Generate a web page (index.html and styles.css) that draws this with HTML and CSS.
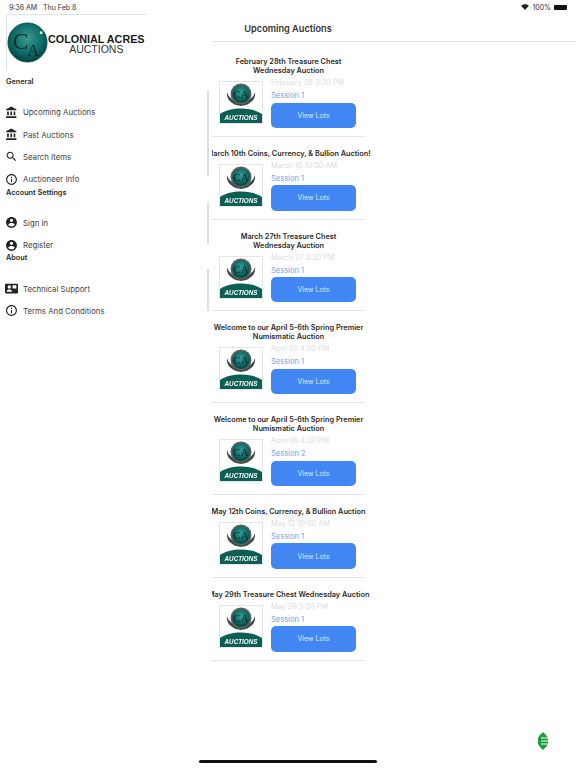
FILE: index.html
```html
<!DOCTYPE html>
<html>

<head>
    <meta charset="utf-8" />
    <meta name="viewport" content="width=device-width, initial-scale=1" />
    <title>Upcoming Auctions</title>
    <link rel="stylesheet" href="styles.css">
</head>

<body>
    <svg class="defs" width="0" height="0">
        <defs>
            <radialGradient id="ball" cx="50%" cy="40%" r="60%">
                <stop offset="0" stop-color="#3a9a92" />
                <stop offset="0.65" stop-color="#0d6a66" />
                <stop offset="1" stop-color="#063f3f" />
            </radialGradient>
            <symbol id="thumb" viewBox="0 0 44 43">
                <rect x="0.5" y="0.5" width="43" height="42" fill="#fff" stroke="#e6e6e6" />
                <path d="M8 11c-1 7 4 11 9 13l5 1 5-1c5-2 10-6 9-13-1 5-7 10-14 10S9 16 8 11z" fill="#3f4947" />
                <circle cx="22" cy="13" r="10.500" fill="#59625f" />
                <circle cx="22" cy="13" r="8.800" fill="url(#ball)" />
                <text x="22" y="17" class="thumb-mark">CA</text>
                <path d="M1 42V33C7 29 14 27.500 22 27.500S37 29 43 33v9z" fill="#0b5f55" />
                <text x="22" y="38.500" class="thumb-label">AUCTIONS</text>
            </symbol>
            <symbol id="i-bank" viewBox="0 0 24 24">
                <path d="M4 10v7h3v-7H4zm6 0v7h3v-7h-3zM2 22h19v-3H2v3zm14-12v7h3v-7h-3zm-4.500-9L2 6v2h19V6l-9.500-5z" />
            </symbol>
            <symbol id="i-search" viewBox="0 0 24 24">
                <path d="M15.500 14h-.79l-.28-.27C15.410 12.590 16 11.110 16 9.500 16 5.910 13.090 3 9.500 3S3 5.910 3 9.500 5.910 16 9.500 16c1.610 0 3.090-.59 4.230-1.570l.27.28v.79l5 4.990L20.490 19l-4.990-5zm-6 0C7.010 14 5 11.990 5 9.500S7.010 5 9.500 5 14 7.010 14 9.500 11.990 14 9.500 14z" />
            </symbol>
            <symbol id="i-info" viewBox="0 0 24 24">
                <path d="M11 17h2v-6h-2v6zm1-15C6.480 2 2 6.480 2 12s4.480 10 10 10 10-4.480 10-10S17.520 2 12 2zm0 18c-4.410 0-8-3.590-8-8s3.590-8 8-8 8 3.590 8 8-3.590 8-8 8zm-1-11h2V7h-2v2z" />
            </symbol>
            <symbol id="i-user" viewBox="0 0 24 24">
                <path d="M12 2C6.480 2 2 6.480 2 12s4.480 10 10 10 10-4.480 10-10S17.520 2 12 2zm0 3c1.660 0 3 1.340 3 3s-1.340 3-3 3-3-1.340-3-3 1.340-3 3-3zm0 14.200c-2.500 0-4.710-1.280-6-3.220.03-1.990 4-3.080 6-3.080 1.990 0 5.970 1.090 6 3.080-1.290 1.940-3.500 3.220-6 3.220z" />
            </symbol>
            <symbol id="i-support" viewBox="0 0 24 24">
                <path d="M22 3H2C.9 3 0 3.900 0 5v14c0 1.100.9 2 2 2h20c1.100 0 2-.9 2-2V5c0-1.100-.9-2-2-2zM8 6c1.660 0 3 1.340 3 3s-1.340 3-3 3-3-1.340-3-3 1.340-3 3-3zm5 12H3v-1c0-2 3.400-3.100 5-3.100s5 1.100 5 3.100v1zm8-6h-7V6h7v6z" />
            </symbol>
        </defs>
    </svg>

    <div class="status">
        <div>9:36 AM &nbsp; Thu Feb 8</div>
        <div class="status-right">
            <svg class="wifi" viewBox="0 0 16 12">
                <path d="M8 12L0 3.500C4.500-.8 11.500-.8 16 3.500z" />
            </svg>
            <span>100%</span>
            <div class="battery"></div>
        </div>
    </div>

    <div class="shell">
        <nav class="sidebar">
            <div class="logo">
                <svg class="logo-ball" viewBox="0 0 42 42">
                    <circle cx="21" cy="21" r="20" fill="url(#ball)" stroke="#0a4f4d" />
                    <circle cx="35" cy="11" r="1.500" fill="#d7f0ee" />
                    <text x="14" y="28" class="logo-c">C</text>
                    <text x="27" y="35" class="logo-a">A</text>
                </svg>
                <div class="logo-text">
                    <div class="logo-name">COLONIAL ACRES</div>
                    <div class="logo-sub">AUCTIONS</div>
                </div>
            </div>

            <div class="nav-title">General</div>
            <a class="nav-row"><svg class="nav-icon"><use href="#i-bank" /></svg>Upcoming Auctions</a>
            <a class="nav-row"><svg class="nav-icon"><use href="#i-bank" /></svg>Past Auctions</a>
            <a class="nav-row"><svg class="nav-icon"><use href="#i-search" /></svg>Search Items</a>
            <a class="nav-row"><svg class="nav-icon"><use href="#i-info" /></svg>Auctioneer Info</a>

            <div class="nav-title">Account Settings</div>
            <a class="nav-row"><svg class="nav-icon"><use href="#i-user" /></svg>Sign In</a>
            <a class="nav-row"><svg class="nav-icon"><use href="#i-user" /></svg>Register</a>

            <div class="nav-title">About</div>
            <a class="nav-row"><svg class="nav-icon"><use href="#i-support" /></svg>Technical Support</a>
            <a class="nav-row"><svg class="nav-icon"><use href="#i-info" /></svg>Terms And Conditions</a>
        </nav>

        <div class="rail">
            <div class="rail-long"></div>
            <div class="rail-mid"></div>
            <div class="rail-short"></div>
        </div>

        <main class="main">
            <header class="main-head">Upcoming Auctions</header>
            <div class="list">
                <section class="card">
                    <h2 class="card-title">February 28th Treasure Chest<br />Wednesday Auction</h2>
                    <div class="card-body">
                        <svg class="thumb"><use href="#thumb" /></svg>
                        <div class="card-info">
                            <div class="card-date">February 28 3:30 PM</div>
                            <div class="card-session">Session 1</div>
                            <button class="card-btn">View Lots</button>
                        </div>
                    </div>
                </section>
                <section class="card">
                    <h2 class="card-title">March 10th Coins, Currency, &amp; Bullion Auction!</h2>
                    <div class="card-body">
                        <svg class="thumb"><use href="#thumb" /></svg>
                        <div class="card-info">
                            <div class="card-date">March 10 10:00 AM</div>
                            <div class="card-session">Session 1</div>
                            <button class="card-btn">View Lots</button>
                        </div>
                    </div>
                </section>
                <section class="card">
                    <h2 class="card-title">March 27th Treasure Chest<br />Wednesday Auction</h2>
                    <div class="card-body">
                        <svg class="thumb"><use href="#thumb" /></svg>
                        <div class="card-info">
                            <div class="card-date">March 27 3:30 PM</div>
                            <div class="card-session">Session 1</div>
                            <button class="card-btn">View Lots</button>
                        </div>
                    </div>
                </section>
                <section class="card">
                    <h2 class="card-title">Welcome to our April 5-6th Spring Premier<br />Numismatic Auction</h2>
                    <div class="card-body">
                        <svg class="thumb"><use href="#thumb" /></svg>
                        <div class="card-info">
                            <div class="card-date">April 05 4:30 PM</div>
                            <div class="card-session">Session 1</div>
                            <button class="card-btn">View Lots</button>
                        </div>
                    </div>
                </section>
                <section class="card">
                    <h2 class="card-title">Welcome to our April 5-6th Spring Premier<br />Numismatic Auction</h2>
                    <div class="card-body">
                        <svg class="thumb"><use href="#thumb" /></svg>
                        <div class="card-info">
                            <div class="card-date">April 06 4:30 PM</div>
                            <div class="card-session">Session 2</div>
                            <button class="card-btn">View Lots</button>
                        </div>
                    </div>
                </section>
                <section class="card">
                    <h2 class="card-title">May 12th Coins, Currency, &amp; Bullion Auction</h2>
                    <div class="card-body">
                        <svg class="thumb"><use href="#thumb" /></svg>
                        <div class="card-info">
                            <div class="card-date">May 12 10:00 AM</div>
                            <div class="card-session">Session 1</div>
                            <button class="card-btn">View Lots</button>
                        </div>
                    </div>
                </section>
                <section class="card">
                    <h2 class="card-title">May 29th Treasure Chest Wednesday Auction</h2>
                    <div class="card-body">
                        <svg class="thumb"><use href="#thumb" /></svg>
                        <div class="card-info">
                            <div class="card-date">May 29 3:30 PM</div>
                            <div class="card-session">Session 1</div>
                            <button class="card-btn">View Lots</button>
                        </div>
                    </div>
                </section>
            </div>
        </main>
    </div>

    <svg class="widget" viewBox="0 0 14 18">
        <path d="M7 0l3 3 2 3v6l-2 3-3 3-3-3-2-3V6l2-3z" fill="#1f9a3e" />
        <path d="M5 6h8M5 9h9M5 12h8" stroke="#fff" stroke-width="1.200" />
    </svg>
    <div class="home-bar"></div>
</body>

</html>
```
FILE: styles.css
```css
body {
    margin: 0;
    height: 768px;
    overflow: hidden;
    background: #fff;
    color: #333;
    font-family: "Inter", "Liberation Sans", sans-serif;
}

.defs {
    position: absolute;
}

.status {
    display: flex;
    justify-content: space-between;
    align-items: center;
    height: 14px;
    padding: 0 9px;
    font-size: 7px;
    color: #333;
}

.status-right {
    display: flex;
    align-items: center;
    gap: 3px;
}

.wifi {
    width: 8px;
    height: 6px;
    fill: #222;
}

.battery {
    width: 13px;
    height: 5px;
    border-radius: 1px;
    background: #111;
}

.shell {
    display: flex;
}

.sidebar {
    width: 207px;
    font-size: 7.800px;
}

.logo {
    display: flex;
    align-items: center;
    width: 140px;
    height: 56px;
    margin-left: 6px;
    border-top: 1px solid #e2e2e2;
    border-left: 1px solid #e2e2e2;
    box-sizing: border-box;
}

.logo-ball {
    width: 41px;
    height: 41px;
    flex: none;
    filter: blur(0.3px);
}

.logo-c {
    font-family: "Liberation Serif", serif;
    font-size: 24px;
    fill: #0a2b2b;
    text-anchor: middle;
}

.logo-a {
    font-family: "Liberation Serif", serif;
    font-size: 17px;
    fill: #0a2b2b;
    text-anchor: middle;
}

.logo-text {
    padding-top: 2px;
    text-align: center;
    line-height: 10px;
}

.logo-name {
    font-family: "Liberation Sans", sans-serif;
    font-size: 10.800px;
    font-weight: bold;
    color: #1a1a1a;
    white-space: nowrap;
}

.logo-sub {
    font-family: "Liberation Sans", sans-serif;
    font-size: 10.500px;
    color: #333;
}

.nav-title {
    height: 10px;
    line-height: 10px;
    margin: -3px 0 14px 6px;
    font-size: 7.300px;
    font-weight: 600;
    color: #2b2b2b;
}

.logo + .nav-title {
    margin-top: 7px;
}

.nav-row {
    display: flex;
    align-items: center;
    height: 22.400px;
    padding-left: 5px;
    gap: 5px;
    color: #444;
}

.nav-icon {
    width: 13px;
    height: 13px;
    flex: none;
    fill: #222;
}

.rail {
    width: 2px;
    margin-right: 3px;
    padding-top: 77px;
}

.rail div {
    background: #dedede;
}

.rail-long {
    height: 85px;
}

.rail-mid {
    height: 41px;
    margin-top: 27px;
}

.rail-short {
    height: 42px;
    margin-top: 25px;
}

.main {
    flex: 1;
    overflow: hidden;
}

.main-head {
    height: 26px;
    padding: 1px 212px 0 0;
    border-bottom: 1px solid #e2e2e2;
    text-align: center;
    font-size: 9.200px;
    font-weight: 600;
    line-height: 27px;
    color: #333;
}

.list {
    width: 153px;
    padding-top: 3px;
}

.card {
    padding: 12px 0 8px;
    border-bottom: 1px solid #e4e4e4;
}

.card-title {
    display: flex;
    justify-content: center;
    margin: 0 0 6px;
    font-size: 7.300px;
    font-weight: 600;
    line-height: 9px;
    text-align: center;
    white-space: nowrap;
    color: #2b2b2b;
}

.card-body {
    display: flex;
    gap: 8px;
    height: 46.800px;
    padding-left: 7px;
}

.thumb {
    width: 44px;
    height: 43px;
    flex: none;
    filter: blur(0.3px);
}

.thumb-mark {
    font-family: "Liberation Serif", serif;
    font-size: 11px;
    fill: #0a2b2b;
    text-anchor: middle;
}

.thumb-label {
    font-family: "Liberation Sans", sans-serif;
    font-size: 6.300px;
    font-style: italic;
    font-weight: bold;
    fill: #fff;
    text-anchor: middle;
}

.card-info {
    display: flex;
    flex-direction: column;
    width: 85px;
    margin-top: -3px;
    line-height: 9px;
    white-space: nowrap;
}

.card-date {
    font-size: 7.300px;
    color: #dcdcdc;
}

.card-session {
    margin-top: 4px;
    font-size: 7.500px;
    color: #6f9fee;
}

.card-btn {
    height: 26px;
    margin-top: 2.500px;
    padding: 0;
    border: 0;
    border-radius: 5px;
    background: #4286f3;
    color: #d9e6fc;
    font-family: inherit;
    font-size: 7px;
}

.widget {
    position: absolute;
    left: 536px;
    top: 732px;
    width: 14px;
    height: 18px;
}

.home-bar {
    position: absolute;
    left: 199px;
    top: 760px;
    width: 178px;
    height: 3px;
    border-radius: 2px;
    background: #111;
}
```
